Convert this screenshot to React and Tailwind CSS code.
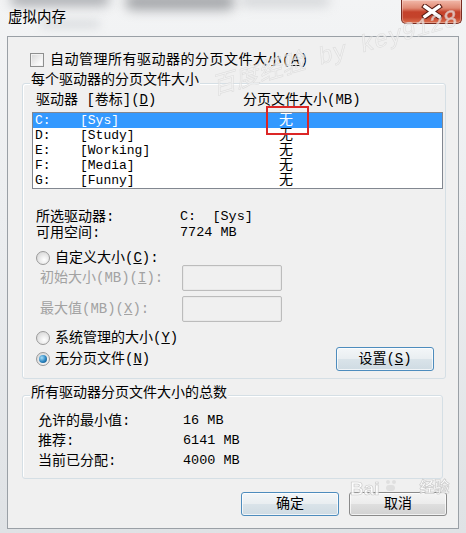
const CJK = "font-['Liberation_Mono','Noto_Sans_CJK_SC',monospace]";

function Checkbox() {
  return (
    <span className="inline-block h-[14px] w-[14px] shrink-0 border border-[#8e8f8f] bg-[linear-gradient(135deg,#d6d6d6,#f7f7f7_70%,#ffffff)] shadow-[inset_0_0_0_1px_#f2f2f2]" />
  );
}

function Radio({ checked }) {
  return (
    <span className="flex h-[14px] w-[14px] shrink-0 items-center justify-center rounded-full border border-[#9a9a9a] bg-[radial-gradient(circle_at_60%_65%,#ffffff,#e2e2e2_60%,#cfcfcf)]">
      {checked && (
        <span className="block h-[8px] w-[8px] rounded-full bg-[radial-gradient(circle_at_35%_35%,#a6def8,#2a84c0_55%,#0d4570)]" />
      )}
    </span>
  );
}

function Button({ children, primary, className = "" }) {
  return (
    <div
      className={
        "flex h-[24px] w-[98px] items-center justify-center rounded-[3px] border text-[14px] leading-[16px] shadow-[inset_0_0_0_1px_rgba(255,255,255,0.7)] " +
        (primary
          ? "border-[#4d8cbd] bg-[linear-gradient(to_bottom,#f3f6f8_0%,#e9eef1_48%,#d9e3e9_52%,#cfdbe3_100%)] "
          : "border-[#8a8a8a] bg-[linear-gradient(to_bottom,#f4f4f4_0%,#ececec_48%,#dedede_52%,#d2d2d2_100%)] ") +
        className
      }
    >
      {children}
    </div>
  );
}

function CloseButton() {
  return (
    <div className="mr-[4px] flex h-[24px] w-[61px] items-center justify-center rounded-b-[5px] border border-t-0 border-[#7a2d22] bg-[linear-gradient(to_bottom,#f2b9aa_0%,#e08a74_35%,#c5412a_52%,#c4432b_75%,#dc7150_100%)] shadow-[inset_0_0_0_1px_rgba(255,255,255,0.3)]">
      <svg width="22" height="15" viewBox="0 0 22 15">
        <path d="M4 2.5 L18 12.5 M18 2.5 L4 12.5" stroke="#5b1d14" strokeWidth="5.5" strokeLinecap="square" />
        <path d="M4 2.5 L18 12.5 M18 2.5 L4 12.5" stroke="#ffffff" strokeWidth="3.4" strokeLinecap="square" />
      </svg>
    </div>
  );
}

export default function App() {
  const rows = [
    ["C:", "[Sys]", true],
    ["D:", "[Study]"],
    ["E:", "[Working]"],
    ["F:", "[Media]"],
    ["G:", "[Funny]"],
  ];
  return (
    <div
      className={
        "relative h-[533px] w-[466px] overflow-hidden bg-[linear-gradient(to_bottom,#f3f4f5_0%,#eceef0_40%,#dfe2e5_100%)] text-[14px] text-black " +
        CJK
      }
    >
      {/* blurred glass smudges */}
      <div className="absolute -top-[8px] left-[10px] h-[14px] w-[100px] rounded-full bg-[#7d8086] opacity-60 blur-[6px]" />
      <div className="absolute -top-[6px] left-[125px] h-[16px] w-[110px] rounded-full bg-[#6f7277] opacity-60 blur-[6px]" />
      <div className="absolute -top-[4px] left-[240px] h-[10px] w-[90px] rounded-full bg-[#b8bbbf] opacity-60 blur-[6px]" />
      <div className="absolute top-[20px] left-[40px] h-[8px] w-[60px] rounded-full bg-[#c9ccd0] opacity-60 blur-[5px]" />

      {/* title bar */}
      <div className="relative flex h-[36px] items-start justify-between">
        <div className="ml-[8px] mt-[10px] text-[14.5px] leading-[16px]">虚拟内存</div>
        <CloseButton />
      </div>

      {/* client area */}
      <div className="relative mx-[7px] h-[493px] border border-[#9aa0a6] bg-[#f0f0f0]">
        {/* checkbox row */}
        <div className="ml-[22px] mt-[16px] flex h-[14px] items-center gap-[6px] leading-[16px]">
          <Checkbox />
          <span className="tracking-[0.5px]">
            自动管理所有驱动器的分页文件大小(<u>A</u>)
          </span>
        </div>

        {/* group 1 */}
        <div className="relative ml-[14px] mt-[16px] h-[296px] w-[424px] rounded-[3px] border border-[#d5dfe5] shadow-[inset_1px_1px_0_#ffffff]">
          <span className="absolute -top-[12px] left-[7px] bg-[#f0f0f0] px-[1px] leading-[16px]">
            每个驱动器的分页文件大小
          </span>

          <div className="mt-[8px] flex h-[16px] leading-[16px]">
            <span className="ml-[13px] w-[207px]">
              驱动器 [卷标](<u>D</u>)
            </span>
            <span>分页文件大小(MB)</span>
          </div>

          <div className="ml-[9px] mt-[4px] h-[77px] w-[411px] border border-[#828790] bg-white">
            {rows.map(([d, l, sel]) => (
              <div
                key={d}
                className={
                  "flex h-[15px] items-center text-[13px] leading-[15px] " +
                  (sel ? "bg-[#3399ff] text-white" : "")
                }
              >
                <span className="ml-[2px] w-[45px]">{d}</span>
                <span className="w-[199px]">{l}</span>
                <span className="text-[14px]">无</span>
              </div>
            ))}
          </div>

          <div className="mt-[20px] flex h-[16px] leading-[16px]">
            <span className="ml-[13px] w-[144px]">所选驱动器:</span>
            <span className="whitespace-pre text-[13.5px]">C:  [Sys]</span>
          </div>
          <div className="flex h-[16px] leading-[16px]">
            <span className="ml-[13px] w-[144px]">可用空间:</span>
            <span className="whitespace-pre text-[13.5px]">7724 MB</span>
          </div>

          <div className="ml-[13px] mt-[9px] flex h-[15px] items-center gap-[5px] leading-[16px]">
            <Radio />
            <span>
              自定义大小(<u>C</u>):
            </span>
          </div>

          <div className="flex h-[26px] items-center leading-[16px]">
            <span className="ml-[17px] w-[142px] text-[#a2a2a2]">
              初始大小(MB)(<u>I</u>):
            </span>
            <div className="h-[26px] w-[100px] rounded-[2px] border border-[#bcbcbc] bg-[#f0f0f0] shadow-[inset_0_0_0_1px_#e9e9e9]" />
          </div>
          <div className="mt-[5px] flex h-[26px] items-center leading-[16px]">
            <span className="ml-[17px] w-[142px] text-[#a2a2a2]">
              最大值(MB)(<u>X</u>):
            </span>
            <div className="h-[26px] w-[100px] rounded-[2px] border border-[#bcbcbc] bg-[#f0f0f0] shadow-[inset_0_0_0_1px_#e9e9e9]" />
          </div>

          <div className="ml-[13px] mt-[8px] flex h-[15px] items-center gap-[5px] leading-[16px]">
            <Radio />
            <span>
              系统管理的大小(<u>Y</u>)
            </span>
          </div>

          <div className="mt-[2px] flex h-[24px] items-center leading-[16px]">
            <div className="ml-[13px] flex items-center gap-[5px]">
              <Radio checked />
              <span>
                无分页文件(<u>N</u>)
              </span>
            </div>
            <Button primary className="ml-auto mr-[11px]">
              <span>
                设置(<u>S</u>)
              </span>
            </Button>
          </div>
        </div>

        {/* group 2 */}
        <div className="relative ml-[14px] mt-[16px] h-[84px] w-[421px] rounded-[3px] border border-[#d5dfe5] pt-[15px] shadow-[inset_1px_1px_0_#ffffff]">
          <span className="absolute -top-[11px] left-[7px] bg-[#f0f0f0] px-[1px] leading-[16px]">
            所有驱动器分页文件大小的总数
          </span>
          {[
            ["允许的最小值:", "16 MB"],
            ["推荐:", "6141 MB"],
            ["当前已分配:", "4000 MB"],
          ].map(([k, v]) => (
            <div key={k} className="flex h-[20px] items-center leading-[16px]">
              <span className="ml-[15px] w-[145px]">{k}</span>
              <span className="text-[13.5px]">{v}</span>
            </div>
          ))}
        </div>

        {/* buttons */}
        <div className="ml-[233px] mt-[13px] flex gap-[10px]">
          <Button primary>确定</Button>
          <Button>取消</Button>
        </div>
      </div>

      {/* red highlight box */}
      <div className="absolute left-[266px] top-[106px] h-[29px] w-[43px] border-2 border-[#dc2626]" />

      {/* watermarks */}
      <div className="pointer-events-none absolute left-[208px] top-[36px] -rotate-[16deg] whitespace-nowrap text-[24px] italic text-[#f2f2f2] [-webkit-text-stroke:0.6px_#d6d6d6] opacity-70">
        百度经验 by key9128
      </div>
      <div className="pointer-events-none absolute left-[350px] top-[479px] flex items-end gap-[2px] text-[19px] font-bold leading-[20px] text-white [-webkit-text-stroke:0.7px_#c4c4c4] opacity-85">
        <span className="font-['Liberation_Sans',sans-serif]">Bai</span>
        <span className="mb-[8px] ml-[4px] flex flex-col items-center">
          <span className="flex gap-[2px]">
            <span className="h-[4px] w-[4px] rounded-full bg-[#dddddd]" />
            <span className="h-[4px] w-[4px] rounded-full bg-[#dddddd]" />
          </span>
          <span className="mt-[1px] h-[6px] w-[9px] rounded-full bg-[#dddddd]" />
        </span>
        <span className="ml-[22px] text-[15px]">经验</span>
      </div>
    </div>
  );
}
